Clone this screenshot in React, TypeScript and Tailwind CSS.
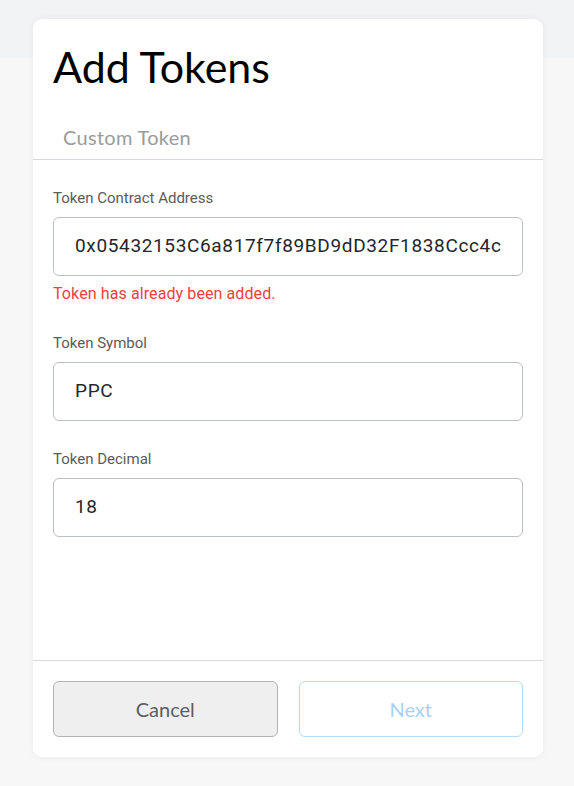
import React from "react";

function Field({ label, value, error }: { label: string; value: string; error?: string }) {
  return (
    <div className="flex flex-col">
      <label className="text-[15px] leading-[20px] text-[#5b5b5b] mb-[9px]" style={{ fontFamily: "Roboto, sans-serif" }}>
        {label}
      </label>
      <div className="h-[59px] rounded-[6px] border border-[#bbc0c5] flex items-center pl-[21px] pr-[20px]">
        <div className="flex-1 overflow-hidden whitespace-nowrap">
          <span className="text-[19px] text-[#24272a] tracking-[0.65px]" style={{ fontFamily: "Roboto, sans-serif" }}>{value}</span>
        </div>
      </div>
      {error && (
        <div className="text-[16px] leading-[22px] text-[#f04040] mt-[7px] tracking-[0.1px]" style={{ fontFamily: "Roboto, sans-serif" }}>
          {error}
        </div>
      )}
    </div>
  );
}

export default function App() {
  return (
    <div className="min-h-[786px] w-[574px] bg-[#f7f7f7] relative overflow-hidden">
      <div className="absolute top-0 left-0 right-0 h-[58px] bg-[#f2f3f4]" />
      <div className="relative pt-[19px] pl-[33px]">
        <div className="bg-white rounded-[9px] w-[510px] h-[738px] shadow-[0_0_7px_rgba(0,0,0,0.06)] flex flex-col">
          <div className="px-[20px] pt-[23px]">
            <h1 className="text-[43px] leading-[50px] text-black" style={{ fontFamily: "Lato, sans-serif" }}>Add Tokens</h1>
          </div>
          <div className="px-[30px] pt-[31px] pb-[8px] border-b border-[#d6d9dc]">
            <span className="text-[20px] leading-[28px] text-[#9b9b9b] tracking-[0.3px]" style={{ fontFamily: "Lato, sans-serif" }}>Custom Token</span>
          </div>
          <div className="px-[20px] pt-[28px] flex flex-col gap-[28px] flex-1">
            <Field label="Token Contract Address" value="0x05432153C6a817f7f89BD9dD32F1838Ccc4cd4" error="Token has already been added." />
            <Field label="Token Symbol" value="PPC" />
            <Field label="Token Decimal" value="18" />
          </div>
          <div className="border-t border-[#d6d9dc] px-[20px] pt-[20px] pb-[20px] flex gap-[21px]">
            <button className="flex-1 h-[56px] rounded-[6px] border border-[#b3b3b3] bg-[#efefef] text-[20px] text-[#5b5d67]" style={{ fontFamily: "Lato, sans-serif" }}>
              Cancel
            </button>
            <button className="flex-1 h-[56px] rounded-[6px] border border-[#b5dbf7] bg-white text-[20px] text-[#a8d2f4]" style={{ fontFamily: "Lato, sans-serif" }}>
              Next
            </button>
          </div>
        </div>
      </div>
    </div>
  );
}
